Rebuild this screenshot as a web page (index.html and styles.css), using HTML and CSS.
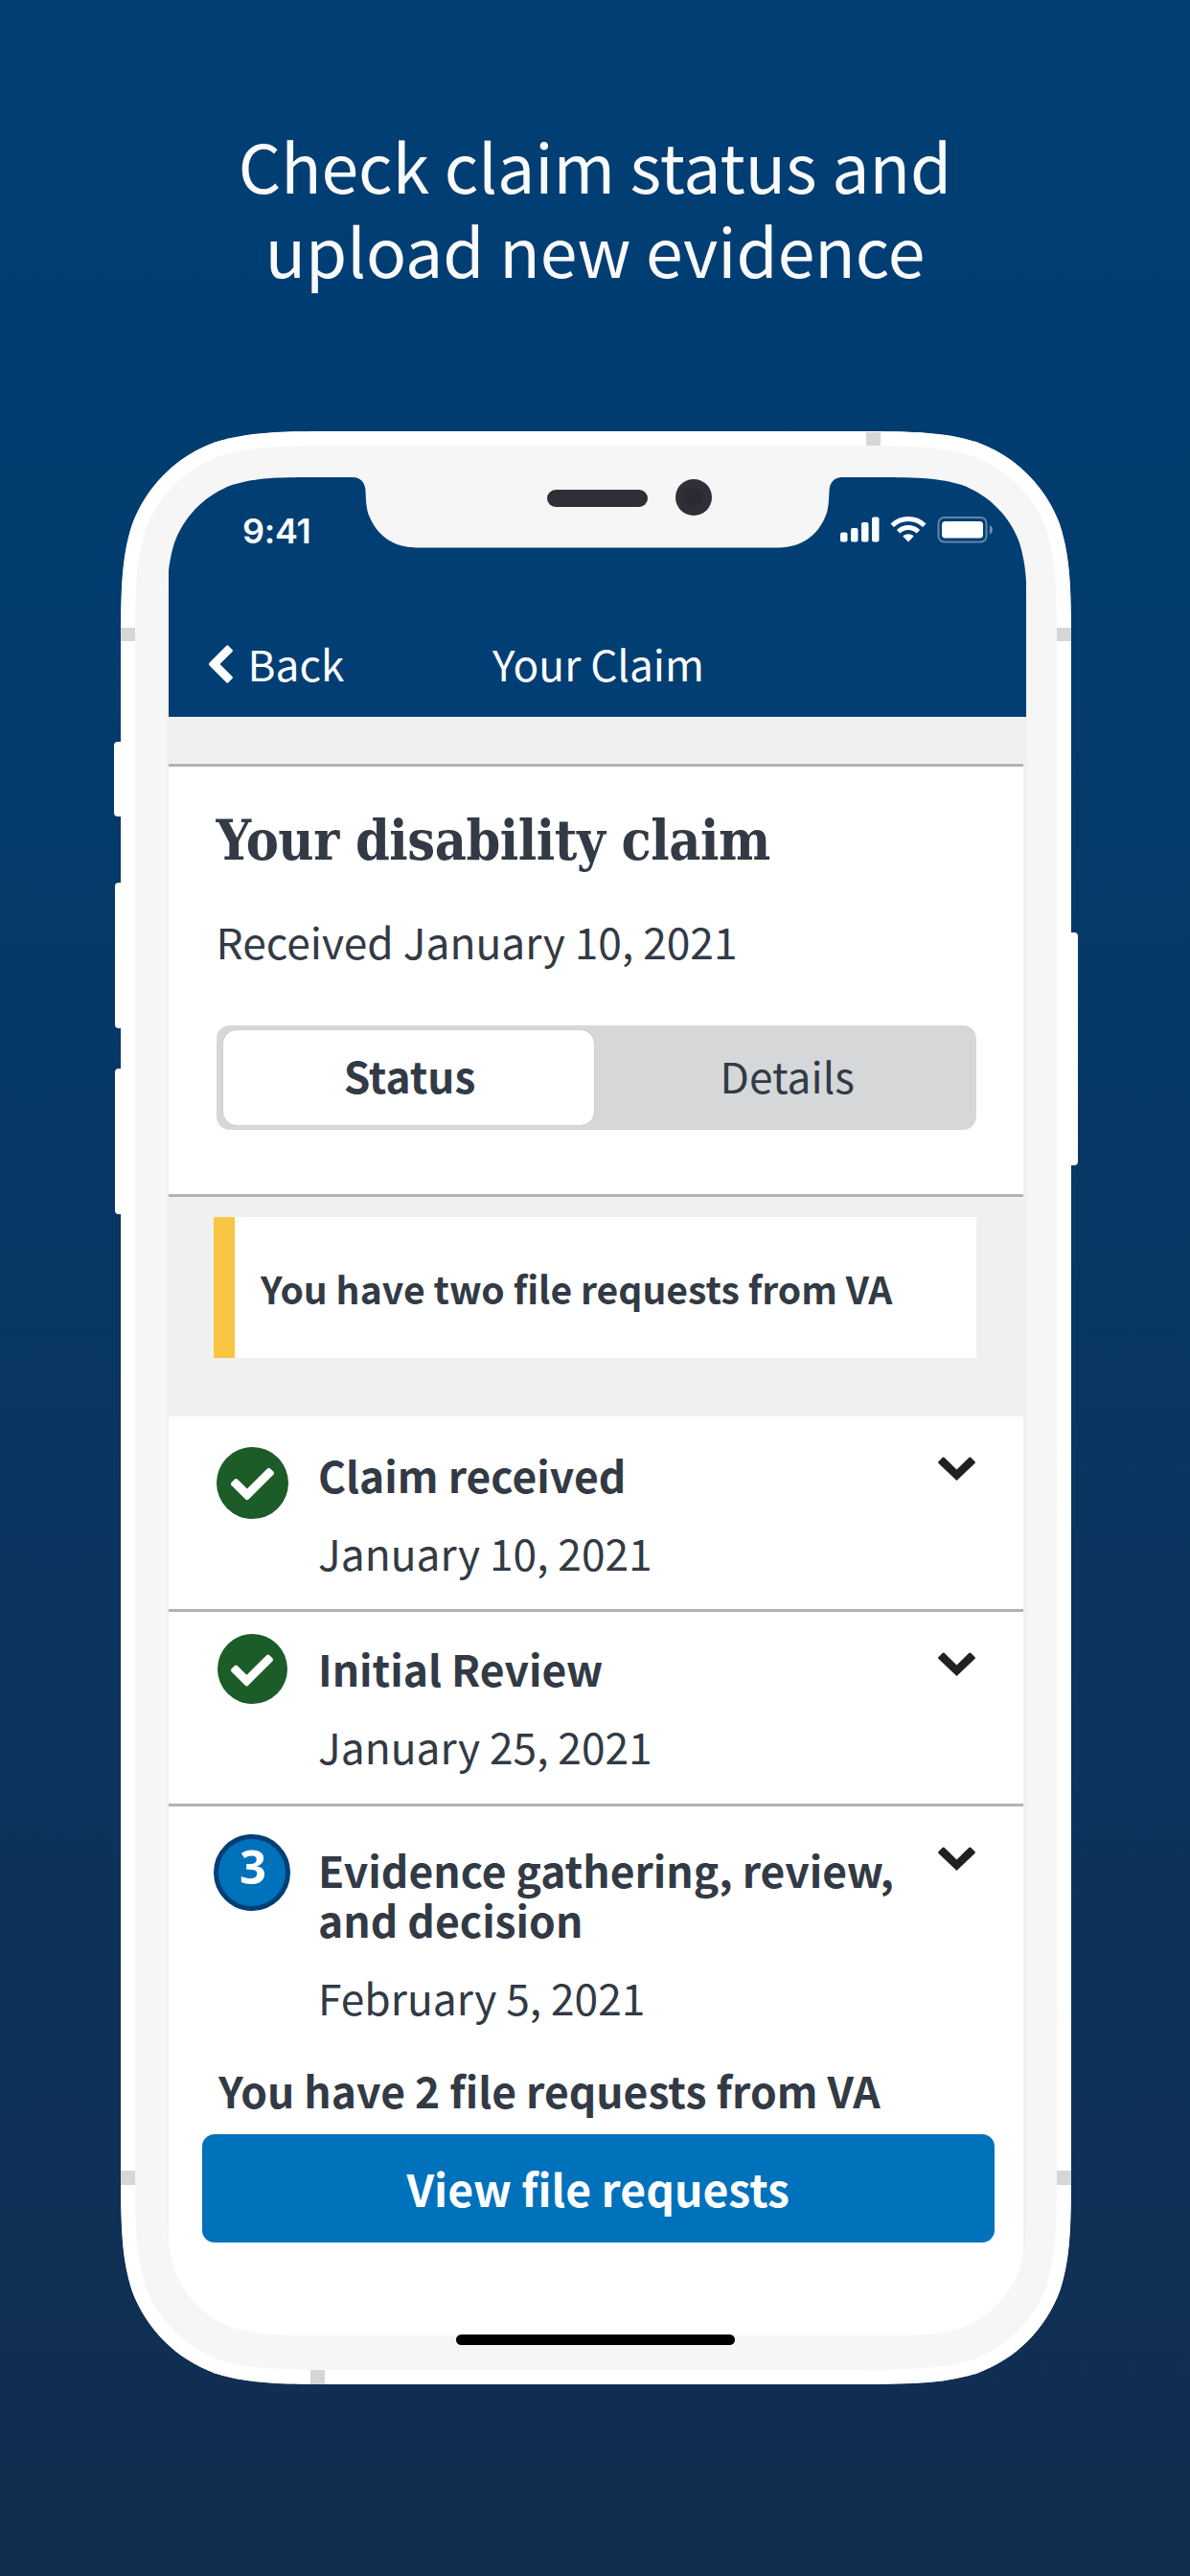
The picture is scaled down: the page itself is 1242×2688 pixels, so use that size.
FILE: index.html
```html
<!DOCTYPE html>
<html lang="en">
<head>
<meta charset="utf-8">
<title>Check claim status and upload new evidence</title>
<link rel="stylesheet" href="styles.css">
</head>
<body>
<svg class="defs" width="0" height="0" aria-hidden="true">
  <symbol id="check" viewBox="0 0 512 512"><path d="M173.898 439.404l-166.4-166.4c-9.997-9.997-9.997-26.206 0-36.204l36.203-36.204c9.997-9.998 26.207-9.998 36.204 0L192 312.69 432.095 72.596c9.997-9.997 26.207-9.997 36.204 0l36.203 36.204c9.997 9.997 9.997 26.206 0 36.204l-294.4 294.401c-9.998 9.997-26.207 9.997-36.204-.001z"/></symbol>
  <symbol id="down" viewBox="0 0 39 25"><path d="M4.6 1 Q5.7 0 6.8 1 L19.5 13.6 L32.2 1 Q33.3 0 34.4 1 L38.4 5 Q39.4 6 38.4 7 L19.5 25 L.6 7 Q-.4 6 .6 5Z"/></symbol>
</svg>

<h1 class="headline">Check claim status and<br>upload new evidence</h1>

<main class="phone">
  <svg class="frame" viewBox="-8 0 1008 2038" aria-hidden="true">
    <defs>
      <path id="body" d="M236.9 0H755.1C823.3 0 857.4 0 894.1 11.6C934.2 26.2 965.8 57.8 980.4 97.9C992 134.6 992 168.7 992 236.9V1801.1C992 1869.3 992 1903.4 980.4 1940.1C965.8 1980.2 934.2 2011.8 894.1 2026.4C857.4 2038 823.3 2038 755.1 2038H236.9C168.7 2038 134.6 2038 97.9 2026.4C57.8 2011.8 26.2 1980.2 11.6 1940.1C0 1903.4 0 1869.3 0 1801.1V236.9C0 168.7 0 134.6 11.6 97.9C26.2 57.8 57.8 26.2 97.9 11.6C134.6 0 168.7 0 236.9 0Z"/>
      <clipPath id="bodyClip"><use href="#body"/></clipPath>
    </defs>
    <g fill="#fff">
      <rect x="-7" y="324" width="20" height="78" rx="4"/>
      <rect x="-6" y="471" width="20" height="152" rx="4"/>
      <rect x="-6" y="665" width="20" height="152" rx="4"/>
      <rect x="979" y="523" width="20" height="243" rx="4"/>
    </g>
    <use href="#body" fill="#f6f6f6" stroke="#fff" stroke-width="30" clip-path="url(#bodyClip)"/>
    <g fill="#d5d6d8">
      <rect x="0" y="205" width="15" height="14"/>
      <rect x="977" y="205" width="15" height="14"/>
      <rect x="778" y="1" width="15" height="14"/>
      <rect x="0" y="1815" width="15" height="15"/>
      <rect x="977" y="1815" width="15" height="15"/>
      <rect x="198" y="2023" width="15" height="15"/>
    </g>
  </svg>

  <div class="screen">
    <header class="topbar">
      <div class="statusbar">
        <span class="clock">9:41</span>
        <svg class="indicators" viewBox="0 0 160 28" fill="#fff" aria-hidden="true">
          <rect x="0" y="16.500" width="7.500" height="10" rx="2"/>
          <rect x="11" y="12" width="7.500" height="14.500" rx="2"/>
          <rect x="22" y="6" width="7.500" height="20.500" rx="2"/>
          <rect x="33" y=".5" width="7.500" height="26" rx="2"/>
          <g fill="none" stroke="#fff" stroke-width="5">
            <path d="M54.200 9.300C63.500.3 78.500.3 87.800 9.300"/>
            <path d="M60.600 15.800C66.400 10.200 75.600 10.200 81.400 15.800"/>
          </g>
          <path d="M65.300 20.600C68.500 17.600 73.500 17.600 76.700 20.600L71 26.400Z"/>
          <rect x="102.500" y="1" width="50" height="25.500" rx="6" fill="none" stroke="#fff" stroke-width="2" opacity=".38"/>
          <rect x="106" y="5" width="43" height="17.500" rx="3.500"/>
          <path d="M156 9C159.800 10.500 159.800 17 156 18.500Z" opacity=".45"/>
        </svg>
      </div>
      <nav class="nav">
        <span class="back">
          <svg class="chevron-left" viewBox="0 0 25 40" fill="#fff" aria-hidden="true"><path d="M18.300.8Q19.300-.2 20.300.8L24.500 5Q25.400 6 24.500 7L11.500 20L24.500 33Q25.400 34 24.500 35L20.300 39.200Q19.300 40.200 18.300 39.200L.6 21.500Q-.6 20 .6 18.500Z"/></svg>
          Back</span>
        <span class="nav-title">Your Claim</span>
      </nav>
    </header>

    <section class="summary">
      <h2 class="title">Your disability claim</h2>
      <p class="received">Received January 10, 2021</p>
      <div class="segment">
        <span class="tab tab-active">Status</span>
        <span class="tab">Details</span>
      </div>
    </section>

    <div class="alert">You have two file requests from VA</div>

    <section class="steps">
      <article class="step">
        <span class="badge done"><svg class="tick"><use href="#check"/></svg></span>
        <div class="info"><h3 class="name">Claim received</h3><p class="date">January 10, 2021</p></div>
        <svg class="chevron"><use href="#down"/></svg>
      </article>
      <article class="step reviewed">
        <span class="badge done second"><svg class="tick"><use href="#check"/></svg></span>
        <div class="info"><h3 class="name">Initial Review</h3><p class="date">January 25, 2021</p></div>
        <svg class="chevron"><use href="#down"/></svg>
      </article>
      <article class="step current">
        <span class="badge number">3</span>
        <div class="info"><h3 class="name">Evidence gathering, review,<br>and decision</h3><p class="date">February 5, 2021</p></div>
        <svg class="chevron"><use href="#down"/></svg>
      </article>
      <p class="requests">You have 2 file requests from VA</p>
      <a class="button">View file requests</a>
    </section>
  </div>

  <svg class="notch" viewBox="0 0 520 76" aria-hidden="true">
    <path fill="#f6f6f6" d="M4 0V1C13 1 17 7 17.500 15C18 25 18 35 22 43C29 59 42 71 61.500 73.700C67 74.500 72 74.500 80 74.500H439C447 74.500 452 74.500 457.500 73.700C477 71 490 59 497 43C501 35 501 25 501.500 15C502 7 506 1 515 1V0Z"/>
    <rect x="207" y="14" width="105" height="18" rx="9" fill="#2f2f38"/>
    <circle cx="360" cy="22" r="19" fill="#2f2f38"/>
    <circle cx="360" cy="22" r="9.500" fill="#2b2b2f"/>
  </svg>
  <span class="home"></span>
</main>
</body>
</html>
```
FILE: styles.css
```css
* { box-sizing: border-box; }

body {
  margin: 0;
  height: 2688px;
  overflow: hidden;
  background: linear-gradient(#003e73 0%, #003e73 10%, #112e51 96%);
  font-family: "Noto Sans CJK SC", "Open Sans", sans-serif;
  color: #323a45;
}

h1, h2, h3, p { margin: 0; }

.defs { position: absolute; }

.headline {
  height: 450px;
  padding-top: 128px;
  font-size: 69.7px;
  font-weight: 400;
  line-height: 88px;
  text-align: center;
  color: #fafafa;
}

.phone {
  position: relative;
  width: 992px;
  height: 2038px;
  margin-left: 126px;
  padding: 48px 46px 0 48px;
}

/* Device shell drawn under the screen */
.frame {
  position: absolute;
  left: -8px;
  top: 0;
  width: 1008px;
  height: 2038px;
}

.screen {
  position: relative;
  display: flex;
  flex-direction: column;
  height: 1939px;
  padding: 0 4px 0 2px;
  background: #f0f0f0;
  clip-path: path("M165.1 0H732.9C780.4 0 804.2 0 829.8 8.1C857.7 18.3 879.7 40.3 889.9 68.2C898 93.8 898 117.6 898 165.1V1773.9C898 1821.4 898 1845.2 889.9 1870.8C879.7 1898.7 857.7 1920.7 829.8 1930.9C804.2 1939 780.4 1939 732.9 1939H165.1C117.6 1939 93.8 1939 68.2 1930.9C40.3 1920.7 18.3 1898.7 8.1 1870.8C0 1845.2 0 1821.4 0 1773.9V165.1C0 117.6 0 93.8 8.1 68.2C18.3 40.3 40.3 18.3 68.2 8.1C93.8 0 117.6 0 165.1 0Z");
}

.topbar {
  height: 250px;
  margin-right: -3px;
  background: #003e73;
  color: #fff;
}

.statusbar {
  display: flex;
  justify-content: space-between;
  align-items: center;
  height: 112px;
  padding: 0 34px 0 77px;
}

.clock {
  margin-top: -1px;
  font: 600 36px/44px "Inter", sans-serif;
  letter-spacing: -0.3px;
}

.indicators {
  width: 160px;
  height: 28px;
  margin-top: -2px;
}

.nav {
  display: grid;
  grid-template-columns: 1fr auto 1fr;
  align-items: center;
  height: 113px;
  margin-top: 25px;
  padding-left: 42px;
  padding-right: 40px;
  font-size: 44.2px;
  line-height: 60px;
}

.back { display: flex; align-items: center; gap: 15.5px; }
.chevron-left { width: 25px; height: 40px; margin-top: 3px; }

.summary {
  height: 452px;
  margin-top: 49px;
  padding: 47px 49.5px 0;
  background: #fff;
  border-top: 3px solid #b1b2b8;
  border-bottom: 3px solid #b1b2b8;
}

.title {
  font: bold 57px/60px "DejaVu Serif Condensed", "DejaVu Serif", serif;
  font-stretch: condensed;
  letter-spacing: -0.5px;
  white-space: nowrap;
}

.received {
  margin-top: 45px;
  font-size: 44.3px;
  line-height: 60px;
}

.segment {
  display: grid;
  grid-template-columns: 387px 1fr;
  height: 109px;
  margin-top: 58px;
  padding: 5px 5px 5px 7.5px;
  background: #d6d7d9;
  border-radius: 14px;
}

.tab {
  padding-left: 10px;
  border-radius: 14px;
  font-size: 44.2px;
  line-height: 94px;
  text-align: center;
}

.tab-active {
  padding-left: 2px;
  background: #fff;
  font-weight: 700;
  box-shadow: 0 0 1px rgba(0, 0, 0, .3);
}

.alert {
  height: 147px;
  margin: 21px 49px 61px 47px;
  padding: 1px 0 0 27px;
  background: #fff;
  border-left: 22px solid #f8c642;
  font-size: 39.1px;
  font-weight: 700;
  line-height: 147px;
  white-space: nowrap;
}

.steps {
  flex: 1;
  background: #fff;
}

.step {
  display: grid;
  grid-template-columns: 80px 1fr 39px;
  height: 204px;
  padding: 0 50px 0 47px;
  border-bottom: 3px solid #b1b2b8;
}

.step + .step { height: 203px; }
.step.current { height: auto; border-bottom: 0; }

.info {
  padding: 35px 0 0 29px;
  font-size: 44.4px;
  line-height: 52px;
  white-space: nowrap;
}

.reviewed .info { padding-top: 33px; }
.current .info { padding-top: 40px; }
.name { font-size: inherit; font-weight: 700; }
.date { margin-top: 29px; font-size: 44.3px; }

.badge {
  display: flex;
  align-items: center;
  justify-content: center;
  justify-self: center;
  width: 75px;
  height: 75px;
  margin-top: 32px;
  border-radius: 50%;
}

.done { background: #1b5c28; }
.second { width: 73px; height: 73px; margin-top: 23px; }
.tick { width: 45px; height: 45px; margin-top: 2px; fill: #fff; }
.second .tick { width: 44px; height: 44px; }

.number {
  width: 80px;
  height: 80px;
  margin-top: 29px;
  padding: 0 0 14px 2px;
  background: #0071bb;
  border: 5px solid #003e73;
  color: #fff;
  font: 700 49px/60px "Noto Sans", sans-serif;
}

.chevron {
  width: 39px;
  height: 25px;
  margin-top: 42px;
  fill: #212121;
}

.requests {
  margin: 45px 0 0 52px;
  font-size: 44.4px;
  font-weight: 700;
  line-height: 52px;
  white-space: nowrap;
}

.button {
  display: block;
  height: 113px;
  margin: 20px 30.5px 0 35px;
  background: #0071bb;
  border-radius: 13px;
  color: #fff;
  font-size: 46.3px;
  font-weight: 700;
  line-height: 112px;
  text-align: center;
}

/* Camera housing lies over the top of the screen */
.notch {
  position: absolute;
  left: 238px;
  top: 47px;
  width: 520px;
  height: 76px;
}

.home {
  position: absolute;
  left: 350px;
  top: 1986px;
  width: 291px;
  height: 11px;
  border-radius: 6px;
  background: #000;
}
```
